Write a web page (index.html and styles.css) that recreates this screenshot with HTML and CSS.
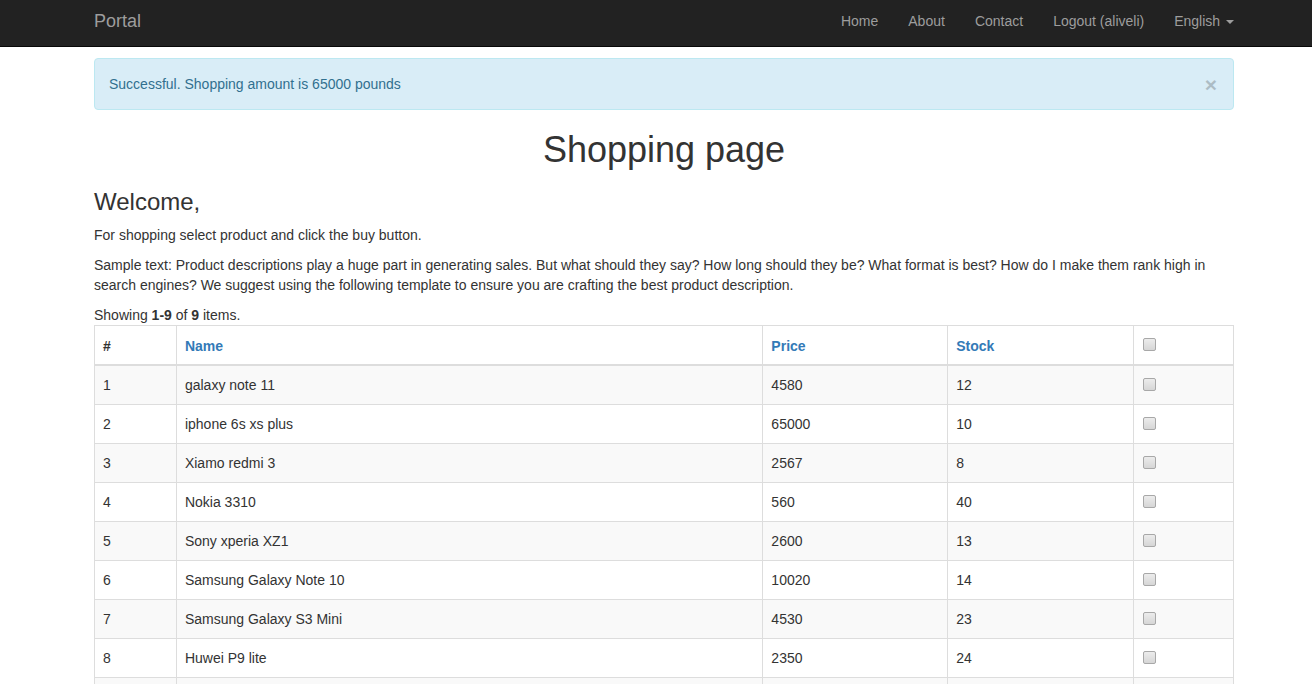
FILE: index.html
```html
<!DOCTYPE html>
<html lang="en">
<head>
<meta charset="utf-8">
<title>Shopping page</title>
<link rel="stylesheet" href="styles.css">
</head>
<body>
<nav class="navbar">
  <div class="wrap navbar-inner">
    <a class="brand" href="#">Portal</a>
    <ul class="nav">
      <li><a href="#">Home</a></li>
      <li><a href="#">About</a></li>
      <li><a href="#">Contact</a></li>
      <li><a href="#">Logout (aliveli)</a></li>
      <li><a href="#">English <span class="caret"></span></a></li>
    </ul>
  </div>
</nav>
<main class="wrap content">
  <div class="alert">
    <span>Successful. Shopping amount is 65000 pounds</span>
    <span class="close">×</span>
  </div>
  <h1 class="title">Shopping page</h1>
  <h3 class="welcome">Welcome,</h3>
  <p>For shopping select product and click the buy button.</p>
  <p>Sample text: Product descriptions play a huge part in generating sales. But what should they say? How long should they be? What format is best? How do I make them rank high in search engines? We suggest using the following template to ensure you are crafting the best product description.</p>
  <div class="summary">Showing <b>1-9</b> of <b>9</b> items.</div>
  <table class="grid">
    <colgroup>
      <col class="c-num"><col class="c-name"><col class="c-price"><col class="c-stock"><col class="c-check">
    </colgroup>
    <thead>
      <tr><th>#</th><th><a href="#">Name</a></th><th><a href="#">Price</a></th><th><a href="#">Stock</a></th><th class="th-check"><input type="checkbox" class="cb"></th></tr>
    </thead>
    <tbody>
      <tr><td>1</td><td>galaxy note 11</td><td>4580</td><td>12</td><td><input type="checkbox" class="cb"></td></tr>
      <tr><td>2</td><td>iphone 6s xs plus</td><td>65000</td><td>10</td><td><input type="checkbox" class="cb"></td></tr>
      <tr><td>3</td><td>Xiamo redmi 3</td><td>2567</td><td>8</td><td><input type="checkbox" class="cb"></td></tr>
      <tr><td>4</td><td>Nokia 3310</td><td>560</td><td>40</td><td><input type="checkbox" class="cb"></td></tr>
      <tr><td>5</td><td>Sony xperia XZ1</td><td>2600</td><td>13</td><td><input type="checkbox" class="cb"></td></tr>
      <tr><td>6</td><td>Samsung Galaxy Note 10</td><td>10020</td><td>14</td><td><input type="checkbox" class="cb"></td></tr>
      <tr><td>7</td><td>Samsung Galaxy S3 Mini</td><td>4530</td><td>23</td><td><input type="checkbox" class="cb"></td></tr>
      <tr><td>8</td><td>Huwei P9 lite</td><td>2350</td><td>24</td><td><input type="checkbox" class="cb"></td></tr>
      <tr><td>9</td><td>LG G6</td><td>3100</td><td>15</td><td><input type="checkbox" class="cb"></td></tr>
    </tbody>
  </table>
</main>
</body>
</html>
```

FILE: styles.css
```css
* { box-sizing: border-box; }
html, body { margin: 0; padding: 0; }
body {
  font-family: "Liberation Sans", Arial, Helvetica, sans-serif;
  font-size: 14px;
  line-height: 20px;
  color: #333;
  background: #fff;
}
a { text-decoration: none; }

.wrap {
  width: 1156px;
  margin: 0 auto;
  padding-left: 16px;
}

.navbar {
  background: #222;
  border-bottom: 1px solid #080808;
  height: 47px;
}
.navbar-inner {
  display: flex;
  justify-content: space-between;
  align-items: stretch;
  height: 46px;
}
.brand {
  color: #9d9d9d;
  font-size: 18px;
  line-height: 20px;
  padding: 11px 0 0 0;
}
.nav {
  list-style: none;
  margin: 0 -15px 0 0;
  padding: 0;
  display: flex;
}
.nav a {
  display: block;
  color: #9d9d9d;
  padding: 11px 15px 15px;
  line-height: 20px;
}
.caret {
  display: inline-block;
  width: 0;
  height: 0;
  margin-left: 2px;
  vertical-align: middle;
  border-top: 4px solid #9d9d9d;
  border-left: 4px solid transparent;
  border-right: 4px solid transparent;
}

.content { padding-top: 11px; }

.alert {
  display: flex;
  justify-content: space-between;
  align-items: center;
  background: #d9edf7;
  border: 1px solid #bce8f1;
  color: #31708f;
  border-radius: 4px;
  padding: 15px 15px 15px 14px;
  height: 52px;
  margin-bottom: 20px;
}
.close {
  font-size: 21px;
  font-weight: bold;
  color: #000;
  opacity: .2;
  line-height: 1;
  margin-right: 1px;
}

.title {
  font-size: 36px;
  font-weight: 500;
  line-height: 39px;
  text-align: center;
  margin: 20px 0 10px;
}
.welcome {
  font-size: 24px;
  font-weight: 500;
  line-height: 26px;
  margin: 20px 0 10px;
}
p { margin: 0 0 10px; }
.summary { line-height: 20px; }

.grid {
  width: 1140px;
  border-collapse: collapse;
  border: 1px solid #ddd;
}
.c-num { width: 82px; }
.c-name { width: 587px; }
.c-price { width: 185px; }
.c-stock { width: 186px; }
.c-check { width: 100px; }
.grid th, .grid td {
  border: 1px solid #ddd;
  padding: 8px;
  line-height: 22px;
  text-align: left;
  vertical-align: top;
}
.grid th {
  font-weight: bold;
  border-bottom: 2px solid #ddd;
  padding-top: 9px;
  padding-bottom: 7px;
}
.grid th.th-check { padding-top: 8px; padding-bottom: 8px; }
.grid th a { color: #337ab7; }
.grid tbody tr:nth-child(odd) { background: #f9f9f9; }

.cb {
  -webkit-appearance: none;
  appearance: none;
  width: 13px;
  height: 13px;
  margin: 4px 0 0 1px;
  border: 1px solid #a8a8a8;
  border-radius: 2px;
  background: linear-gradient(#ececec, #d6d6d6);
  vertical-align: top;
}
```
